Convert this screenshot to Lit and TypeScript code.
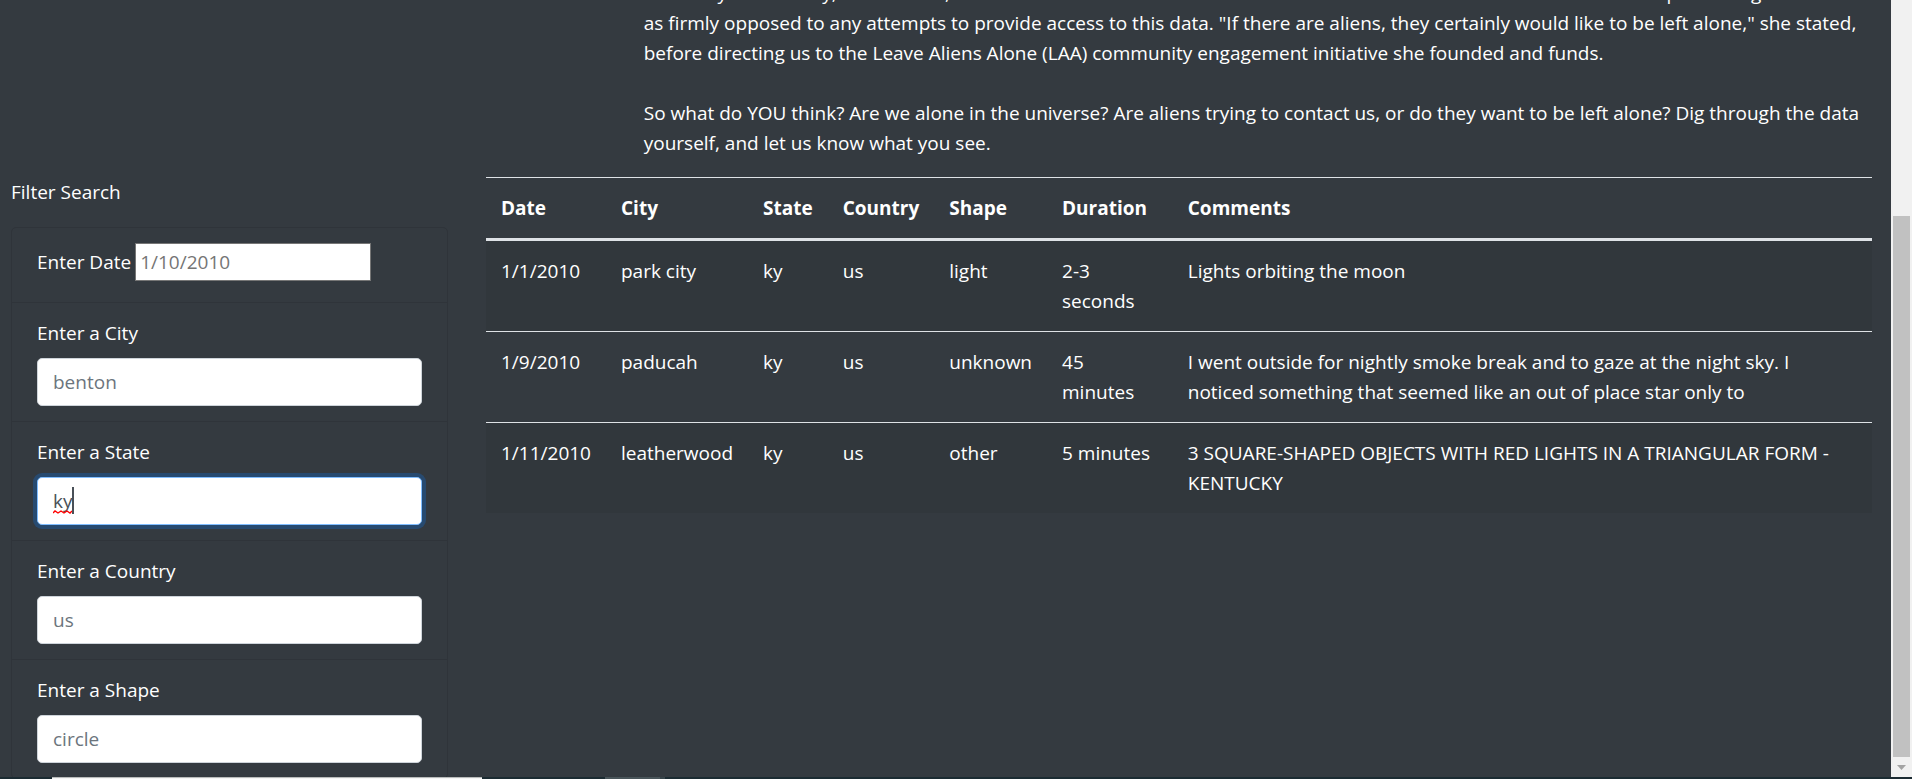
import { LitElement, html, css } from "lit";
import { customElement } from "lit/decorators.js";
import { classMap } from "lit/directives/class-map.js";

interface Sighting {
  date: string;
  city: string;
  state: string;
  country: string;
  shape: string;
  duration: string;
  comments: string;
}

const SIGHTINGS: Sighting[] = [
  { date: "1/1/2010", city: "park city", state: "ky", country: "us", shape: "light", duration: "2-3 seconds", comments: "Lights orbiting the moon" },
  { date: "1/9/2010", city: "paducah", state: "ky", country: "us", shape: "unknown", duration: "45 minutes", comments: "I went outside for nightly smoke break and to gaze at the night sky. I noticed something that seemed like an out of place star only to" },
  { date: "1/11/2010", city: "leatherwood", state: "ky", country: "us", shape: "other", duration: "5 minutes", comments: "3 SQUARE-SHAPED OBJECTS WITH RED LIGHTS IN A TRIANGULAR FORM - KENTUCKY" },
];

@customElement("app-root")
export class AppRoot extends LitElement {
  static styles = css`
    :host {
      display: grid;
      grid-template-columns: minmax(0, 1fr) 21px;
      grid-template-rows: minmax(0, 1fr) 2px;
      height: 100vh;
      overflow: hidden;
      background: #343a40;
      color: #fff;
      font: 19px/30px "Segoe UI", "Open Sans", sans-serif;
    }
    *, *::before, *::after { box-sizing: border-box; }

    .page { overflow: hidden; padding: 0 19px 0 11px; }
    .intro { margin: -22px 0 19px 34%; }
    .intro p { margin: 0 0 30px; }
    .intro p:last-child { margin: 0; }
    .columns {
      display: grid;
      grid-template-columns: minmax(0, 437fr) minmax(0, 1386fr);
      gap: 38px;
      align-items: start;
    }

    .filter-title { margin: 0 0 20px; }
    .filters { list-style: none; margin: 0; padding: 0; border: 1px solid #2f343a; border-radius: 5px; }
    .item { padding: 15px 25px; }
    .item + .item { border-top: 1px solid #2f343a; }
    label { display: block; margin-bottom: 10px; }
    .date-item { display: flex; align-items: center; gap: 4px; padding-bottom: 21px; }
    .date-item label { margin: 0; }
    input { font: inherit; color: #495057; background: #fff; outline: none; }
    input::placeholder { color: #6c757d; opacity: 1; }
    .date { width: 236px; height: 38px; border: 1px solid #767676; padding: 0 4px; }
    .date::placeholder { color: #757575; }
    .field { position: relative; }
    .control { display: block; width: 100%; height: 48px; padding: 7px 15px; border: 1px solid #ced4da; border-radius: 5px; }
    .control.active { border-color: #80bdff; box-shadow: 0 0 0 4px rgba(0, 123, 255, 0.25); }
    .caret { position: absolute; left: 35px; top: 10px; width: 2px; height: 27px; background: #495057; }
    .squiggle { position: absolute; left: 16px; top: 33px; width: 19px; height: 4px; }

    table { width: 100%; border-collapse: collapse; }
    th, td { padding: 15px; text-align: left; vertical-align: top; border-top: 1px solid #dee2e6; }
    thead th { border-bottom: 3px solid #dee2e6; }
    tbody tr:nth-of-type(odd) { background: rgba(0, 0, 0, 0.05); }

    .scrollbar { display: grid; grid-template-rows: 216fr 541fr 20px; background: #f1f1f1; padding: 0 2px; }
    .thumb { grid-row: 2; background: #c1c1c1; }
    .arrow { grid-row: 3; place-self: center; width: 9px; height: 5px; }

    .taskbar { grid-column: 1 / -1; display: grid; grid-template-columns: 52px 430px 123px 55px 5px 1fr; background: #1b2b32; }
    .search { grid-column: 2; background: #f5f5f5; border-top: 1px solid #b9bcbc; }
    .app { grid-column: 4; background: #49555a; }
    .app-edge { grid-column: 5; background: #37444a; }
  `;

  private field(id: string, label: string, placeholder: string, value = "") {
    const active = value !== "";
    return html`<li class="item">
      <label for=${id}>${label}</label>
      <div class="field">
        <input class=${classMap({ control: true, active })} id=${id} type="text" placeholder=${placeholder} .value=${value} />
        ${active
          ? html`<span class="caret"></span>
              <svg class="squiggle" viewBox="0 0 19 4" aria-hidden="true">
                <path d="M0 3 L2 1 L5 3 L8 1 L11 3 L14 1 L17 3 L19 1" fill="none" stroke="#f00" stroke-width="1.4" />
              </svg>`
          : null}
      </div>
    </li>`;
  }

  render() {
    return html`
      <main class="page">
        <section class="intro">
          <p>
            Ms. Emily Winterbury, a local critic, has now released her own statement to several local and national news stations presenting herself<br />
            as firmly opposed to any attempts to provide access to this data. "If there are aliens, they certainly would like to be left alone," she stated, before directing us to the Leave Aliens Alone (LAA) community engagement initiative she founded and funds.
          </p>
          <p>So what do YOU think? Are we alone in the universe? Are aliens trying to contact us, or do they want to be left alone? Dig through the data yourself, and let us know what you see.</p>
        </section>
        <div class="columns">
          <form>
            <p class="filter-title">Filter Search</p>
            <ul class="filters">
              <li class="item date-item">
                <label for="date">Enter Date</label>
                <input class="date" id="date" type="text" placeholder="1/10/2010" />
              </li>
              ${this.field("city", "Enter a City", "benton")}
              ${this.field("state", "Enter a State", "ar", "ky")}
              ${this.field("country", "Enter a Country", "us")}
              ${this.field("shape", "Enter a Shape", "circle")}
            </ul>
          </form>
          <table>
            <thead>
              <tr><th>Date</th><th>City</th><th>State</th><th>Country</th><th>Shape</th><th>Duration</th><th>Comments</th></tr>
            </thead>
            <tbody>
              ${SIGHTINGS.map(
                (s) => html`<tr>
                  <td>${s.date}</td><td>${s.city}</td><td>${s.state}</td><td>${s.country}</td>
                  <td>${s.shape}</td><td>${s.duration}</td><td>${s.comments}</td>
                </tr>`
              )}
            </tbody>
          </table>
        </div>
      </main>
      <div class="scrollbar" aria-hidden="true">
        <div class="thumb"></div>
        <svg class="arrow" viewBox="0 0 9 5"><path d="M0 0 H9 L4.5 5 Z" fill="#a3a3a3" /></svg>
      </div>
      <div class="taskbar" aria-hidden="true">
        <span class="search"></span><span class="app"></span><span class="app-edge"></span>
      </div>`;
  }
}
